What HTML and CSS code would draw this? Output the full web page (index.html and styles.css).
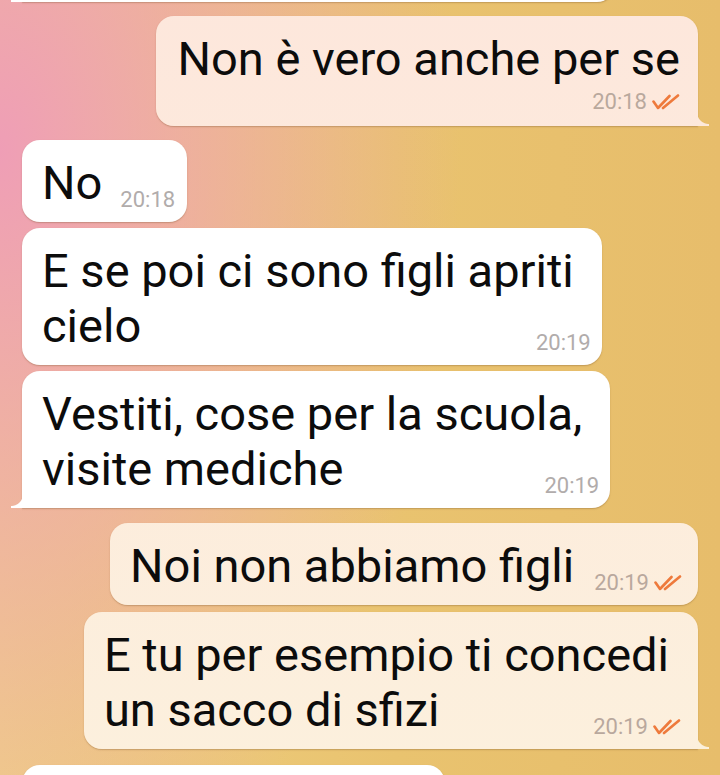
FILE: index.html
```html
<!DOCTYPE html>
<html lang="it">
  <head>
    <meta charset="UTF-8" />
    <meta name="viewport" content="width=device-width, initial-scale=1.0" />
    <title>Chat</title>
    <link rel="stylesheet" href="styles.css">
  </head>
  <body>
    <div class="chat">
      <!-- bottom of the previous message, cut by the screen -->
      <div class="msg msg-in msg-tail msg-cut-top"></div>

      <div class="msg msg-out msg-tail msg-first msg-stack b1">
        <p class="msg-text">Non è vero anche per se</p>
        <div class="msg-meta">
          <span class="msg-time">20:18</span>
          <svg class="ticks" viewBox="0 0 28 16" width="28" height="16">
            <path d="M1.5 7.5 L6 14 L17.5 2" />
            <path d="M11 14 L26 1.5" />
          </svg>
        </div>
      </div>

      <div class="msg msg-in msg-first msg-inline">
        <p class="msg-text">No</p>
        <div class="msg-meta">
          <span class="msg-time">20:18</span>
        </div>
      </div>

      <div class="msg msg-in msg-overlay b3">
        <p class="msg-text">E se poi ci sono figli apriti<br />cielo</p>
        <div class="msg-meta">
          <span class="msg-time">20:19</span>
        </div>
      </div>

      <div class="msg msg-in msg-tail msg-overlay b4">
        <p class="msg-text">Vestiti, cose per la scuola,<br />visite mediche</p>
        <div class="msg-meta">
          <span class="msg-time">20:19</span>
        </div>
      </div>

      <div class="msg msg-out msg-first msg-inline b5">
        <p class="msg-text">Noi non abbiamo figli</p>
        <div class="msg-meta">
          <span class="msg-time">20:19</span>
          <svg class="ticks" viewBox="0 0 28 16" width="28" height="16">
            <path d="M1.5 7.5 L6 14 L17.5 2" />
            <path d="M11 14 L26 1.5" />
          </svg>
        </div>
      </div>

      <div class="msg msg-out msg-tail msg-overlay b6">
        <p class="msg-text">E tu per esempio ti concedi<br />un sacco di sfizi</p>
        <div class="msg-meta">
          <span class="msg-time">20:19</span>
          <svg class="ticks" viewBox="0 0 28 16" width="28" height="16">
            <path d="M1.5 7.5 L6 14 L17.5 2" />
            <path d="M11 14 L26 1.5" />
          </svg>
        </div>
      </div>

      <!-- next message, only its top edge is on screen -->
      <div class="msg msg-in msg-first msg-cut-bottom"></div>
    </div>
  </body>
</html>
```

FILE: styles.css
```css
/* Basic reset */
* {
  margin: 0;
  padding: 0;
  box-sizing: border-box;
}

body {
  font-family: Roboto, "Noto Sans", sans-serif;
  width: 720px;
  height: 775px;
  overflow: hidden;
  color: #0c0c0c;
  background:
    radial-gradient(ellipse 460px 780px at 0 150px, rgba(239, 158, 182, 1) 0%, rgba(239, 158, 182, 0) 100%),
    linear-gradient(to right, #efd083 0%, #e9c36f 55%, #e7bd6b 100%);
}

/* Chat column */
.chat {
  display: flex;
  flex-direction: column;
  padding: 0 22px;
}

.msg {
  position: relative;
  margin-top: 6px;
  border-radius: 18px;
  box-shadow: 0 1px 1.5px rgba(120, 80, 40, 0.35);
}

.msg-first {
  margin-top: 14px;
}

.msg-in {
  align-self: flex-start;
  background-color: #fff;
  --tail: #fff;
}

.msg-out {
  align-self: flex-end;
  background: linear-gradient(to bottom, #fde7dc 0px, #fcf0dd 775px) fixed;
}

/* little curved tail on the last bubble of a group */
.msg-tail.msg-out {
  border-bottom-right-radius: 0;
}

.msg-tail.msg-in {
  border-bottom-left-radius: 0;
}

.msg-tail::after {
  content: "";
  position: absolute;
  bottom: 0;
  width: 12px;
  height: 14px;
}

.msg-tail.msg-out::after {
  right: -11px;
  background: radial-gradient(circle at 100% 0, transparent 11.5px, var(--tail) 12.5px);
}

.msg-tail.msg-in::after {
  left: -11px;
  background: radial-gradient(circle at 0 0, transparent 11.5px, var(--tail) 12.5px);
}

/* Text */
.msg-text {
  font-size: 47px;
  line-height: 55px;
}

.msg-meta {
  display: flex;
  align-items: center;
  gap: 5px;
  height: 24px;
}

.msg-time {
  font-size: 22px;
  line-height: 24px;
  color: #b1acab;
}

.msg-out .msg-time {
  color: #b9a89d;
}

.ticks {
  fill: none;
  stroke: #ee7a3c;
  stroke-width: 2.6;
  stroke-linecap: round;
  stroke-linejoin: round;
}

/* time under the text */
.msg-stack {
  display: flex;
  flex-direction: column;
  padding: 15px 18px 12px 21px;
}

.msg-stack .msg-meta {
  align-self: flex-end;
  margin-top: 4px;
}

/* time on the same line */
.msg-inline {
  display: flex;
  align-items: flex-end;
  gap: 18px;
  padding: 15px 12px 12px 20px;
}

.msg-out.msg-inline {
  gap: 20px;
  padding-right: 16px;
}

.msg-inline .msg-meta {
  margin-bottom: -2px;
}

/* time laid over the end of the last line */
.msg-overlay {
  display: grid;
  padding: 15px 11px 12px 20px;
}

.msg-out.msg-overlay {
  padding-right: 17px;
}

.msg-overlay .msg-text,
.msg-overlay .msg-meta {
  grid-area: 1 / 1;
}

.msg-overlay .msg-text {
  padding-right: 17px;
}

.msg-out.msg-overlay .msg-text {
  padding-right: 12px;
}

.msg-overlay .msg-meta {
  justify-self: end;
  align-self: end;
  margin-bottom: -2px;
}

.b1 {
  --tail: #fde9dc;
}

.b5 {
  margin-top: 15px;
}

.b6 {
  margin-top: 7px;
  --tail: #fbf0dc;
}

/* partial bubbles at the screen edges */
.msg-cut-top {
  width: 593px;
  height: 60px;
  margin-top: -58px;
}

.msg-cut-bottom {
  width: 423px;
  height: 80px;
  margin-top: 16px;
}
```
